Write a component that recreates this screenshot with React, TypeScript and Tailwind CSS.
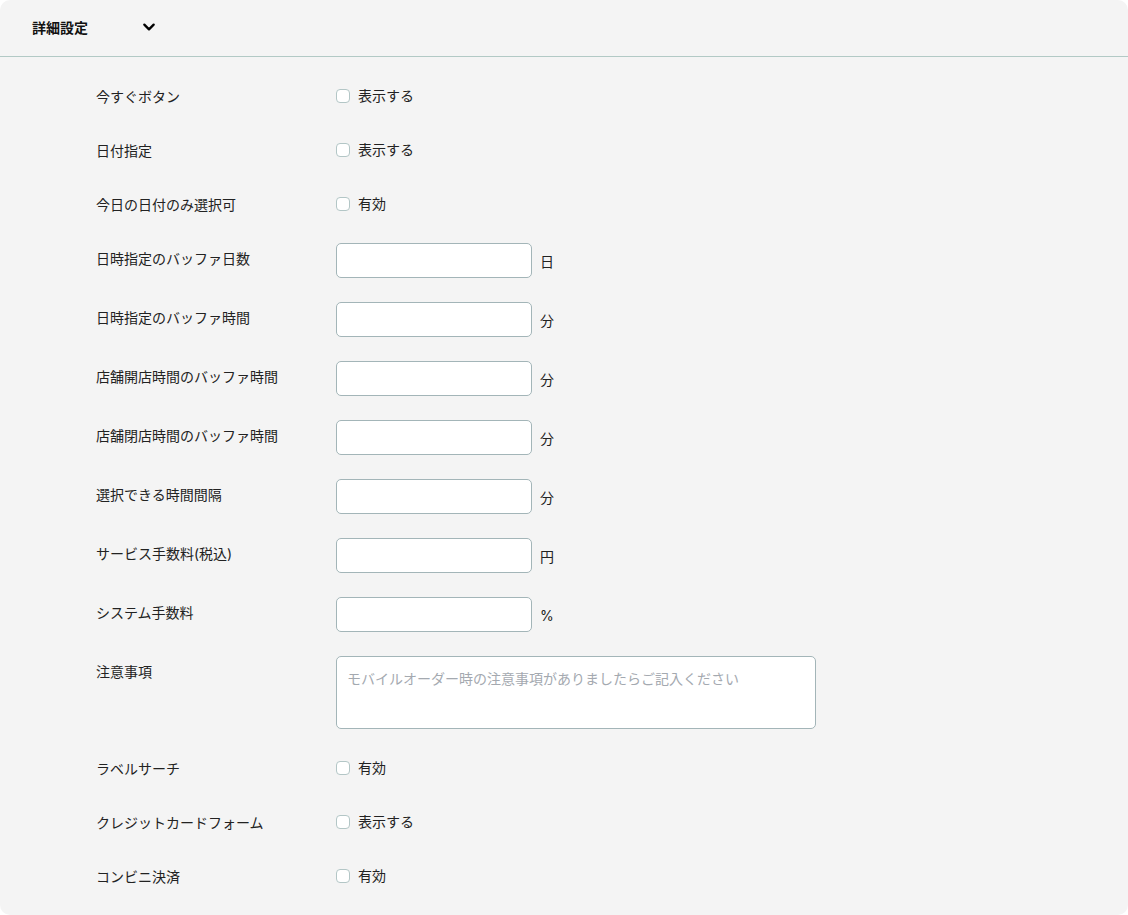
import type { ReactNode } from 'react';

type Row =
  | { kind: 'check'; label: string; text: string }
  | { kind: 'input'; label: string; unit: string }
  | { kind: 'textarea'; label: string; placeholder: string };

const ROWS: Row[] = [
  { kind: 'check', label: '今すぐボタン', text: '表示する' },
  { kind: 'check', label: '日付指定', text: '表示する' },
  { kind: 'check', label: '今日の日付のみ選択可', text: '有効' },
  { kind: 'input', label: '日時指定のバッファ日数', unit: '日' },
  { kind: 'input', label: '日時指定のバッファ時間', unit: '分' },
  { kind: 'input', label: '店舗開店時間のバッファ時間', unit: '分' },
  { kind: 'input', label: '店舗閉店時間のバッファ時間', unit: '分' },
  { kind: 'input', label: '選択できる時間間隔', unit: '分' },
  { kind: 'input', label: 'サービス手数料(税込)', unit: '円' },
  { kind: 'input', label: 'システム手数料', unit: '%' },
  { kind: 'textarea', label: '注意事項', placeholder: 'モバイルオーダー時の注意事項がありましたらご記入ください' },
  { kind: 'check', label: 'ラベルサーチ', text: '有効' },
  { kind: 'check', label: 'クレジットカードフォーム', text: '表示する' },
  { kind: 'check', label: 'コンビニ決済', text: '有効' },
];

function Field({ row }: { row: Row }): ReactNode {
  if (row.kind === 'check') {
    return (
      <label className="flex h-[30px] items-center gap-2">
        <span className="block size-[14px] rounded-[4px] border border-[#b3c6c6] bg-white" />
        <span>{row.text}</span>
      </label>
    );
  }
  if (row.kind === 'input') {
    return (
      <div className="flex items-center gap-2">
        <input
          type="text"
          className="h-[35px] w-[196px] rounded-[5px] border border-[#a3b5b8] bg-white px-2 outline-none"
        />
        <span className="pt-[3px]">{row.unit}</span>
      </div>
    );
  }
  return (
    <textarea
      placeholder={row.placeholder}
      className="block h-[73px] w-[480px] resize-none rounded-[5px] border border-[#a3b5b8] bg-white px-[10px] py-[12px] leading-[20px] outline-none placeholder:text-[#a4a9b0]"
    />
  );
}

export default function App() {
  return (
    <div
      className="min-h-[915px] bg-white text-[14px] leading-[20px] text-[#222]"
      style={{ fontFamily: 'Inter, "Noto Sans CJK JP", sans-serif' }}
    >
      <div className="rounded-[10px] bg-[#f4f4f4]">
        {/* ヘッダー */}
        <div className="flex h-[57px] items-center border-b border-[#b2c9c5] pl-8">
          <h2 className="w-[109px] pb-[1px] font-bold text-[#111]">詳細設定</h2>
          <svg
            width="16"
            height="16"
            viewBox="0 0 24 24"
            fill="none"
            stroke="#000"
            strokeWidth="3.5"
            strokeLinecap="round"
            strokeLinejoin="round"
            className="mb-[2px]"
          >
            <path d="M5 8.5l7 7 7-7" />
          </svg>
        </div>

        <div className="flex flex-col gap-6 px-24 pt-6 pb-6">
          {ROWS.map((row) => (
            <div key={row.label} className="flex items-start">
              <div
                className={`w-[240px] shrink-0 ${
                  row.kind === 'check' ? 'flex h-[30px] items-center pt-[1px]' : 'pt-[6px]'
                }`}
              >
                {row.label}
              </div>
              <Field row={row} />
            </div>
          ))}
        </div>
      </div>
    </div>
  );
}
